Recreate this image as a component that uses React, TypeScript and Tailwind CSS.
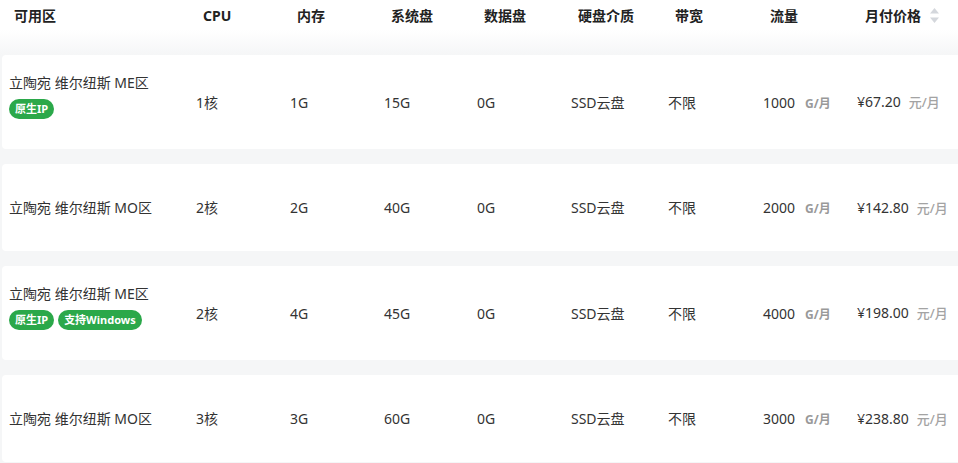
import React from 'react';

interface Plan {
    zone: string;
    tags: string[];
    cpu: string;
    mem: string;
    sysDisk: string;
    dataDisk: string;
    media: string;
    bandwidth: string;
    traffic: string;
    price: string;
}

const plans: Plan[] = [
    { zone: '立陶宛 维尔纽斯 ME区', tags: ['原生IP'], cpu: '1核', mem: '1G', sysDisk: '15G', dataDisk: '0G', media: 'SSD云盘', bandwidth: '不限', traffic: '1000', price: '¥67.20' },
    { zone: '立陶宛 维尔纽斯 MO区', tags: [], cpu: '2核', mem: '2G', sysDisk: '40G', dataDisk: '0G', media: 'SSD云盘', bandwidth: '不限', traffic: '2000', price: '¥142.80' },
    { zone: '立陶宛 维尔纽斯 ME区', tags: ['原生IP', '支持Windows'], cpu: '2核', mem: '4G', sysDisk: '45G', dataDisk: '0G', media: 'SSD云盘', bandwidth: '不限', traffic: '4000', price: '¥198.00' },
    { zone: '立陶宛 维尔纽斯 MO区', tags: [], cpu: '3核', mem: '3G', sysDisk: '60G', dataDisk: '0G', media: 'SSD云盘', bandwidth: '不限', traffic: '3000', price: '¥238.80' },
];

const cols = 'grid grid-cols-[187px_94px_94px_93px_94px_97px_95px_94px_1fr]';
const font = { fontFamily: '"Noto Sans", "Noto Sans CJK SC", sans-serif' };

const SortIcon = () => (
    <svg width="11" height="17" viewBox="0 0 11 17" className="ml-[8px]">
        <path d="M5.5 1 L10 6.5 L1 6.5 Z" fill="#d4d7dc" />
        <path d="M5.5 16 L10 10.5 L1 10.5 Z" fill="#d4d7dc" />
    </svg>
);

export default function App() {
    const headers = ['CPU', '内存', '系统盘', '数据盘', '硬盘介质', '带宽', '流量'];

    return (
        <div className="w-[958px] h-[463px] overflow-hidden bg-[#f5f6f7] text-[14px] text-[#333]" style={font}>
            <div className="bg-white">
                <div className={`${cols} ml-[2px] h-[30px] items-center font-bold text-[#222]`}>
                    <div className="pl-[12px]">可用区</div>
                    {headers.map((h) => (
                        <div key={h} className="pl-[14px]">{h}</div>
                    ))}
                    <div className="pl-[15px] flex items-center">
                        月付价格
                        <SortIcon />
                    </div>
                </div>
            </div>
            <div className="h-[25px] bg-gradient-to-b from-white to-[#f5f6f7]" />

            <div className="flex flex-col gap-[15px]">
                {plans.map((p, i) => (
                    <div
                        key={i}
                        className={`${cols} ml-[2px] w-[960px] bg-white rounded-[4px] items-center ${p.tags.length ? 'min-h-[94px]' : 'min-h-[87px]'}`}
                    >
                        <div className={`pl-[7px] ${p.tags.length ? 'pt-[18px] pb-[30px]' : ''}`}>
                            <div className="leading-[20px] whitespace-nowrap">{p.zone}</div>
                            {p.tags.length > 0 && (
                                <div className="flex gap-[4px] mt-[6px]">
                                    {p.tags.map((t) => (
                                        <span
                                            key={t}
                                            className="h-[20px] px-[6px] rounded-full bg-[#2ba84a] text-white text-[11px] font-bold leading-[20px]"
                                        >
                                            {t}
                                        </span>
                                    ))}
                                </div>
                            )}
                        </div>
                        <div className="pl-[7px]">{p.cpu}</div>
                        <div className="pl-[7px]">{p.mem}</div>
                        <div className="pl-[7px]">{p.sysDisk}</div>
                        <div className="pl-[7px]">{p.dataDisk}</div>
                        <div className="pl-[7px]">{p.media}</div>
                        <div className="pl-[7px]">{p.bandwidth}</div>
                        <div className="pl-[7px] flex items-baseline whitespace-nowrap">
                            {p.traffic}
                            <span className="ml-[10px] text-[12px] font-bold text-[#999]">G/月</span>
                        </div>
                        <div className="pl-[7px] flex items-baseline whitespace-nowrap">
                            {p.price}
                            <span className="ml-[8px] text-[13px] font-medium text-[#a3a3a3]">元/月</span>
                        </div>
                    </div>
                ))}
            </div>
        </div>
    );
}
